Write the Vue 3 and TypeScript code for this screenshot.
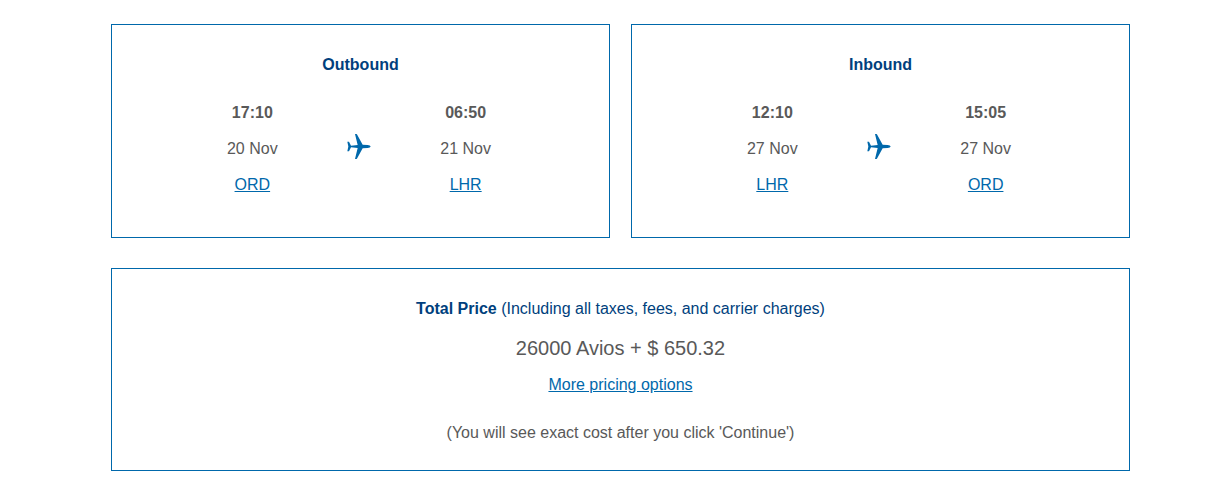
<script setup lang="ts">
interface Stop {
  time: string
  date: string
  airport: string
}

interface Leg {
  title: string
  from: Stop
  to: Stop
}

const legs: Leg[] = [
  {
    title: 'Outbound',
    from: { time: '17:10', date: '20 Nov', airport: 'ORD' },
    to: { time: '06:50', date: '21 Nov', airport: 'LHR' },
  },
  {
    title: 'Inbound',
    from: { time: '12:10', date: '27 Nov', airport: 'LHR' },
    to: { time: '15:05', date: '27 Nov', airport: 'ORD' },
  },
]
</script>

<template>
  <main class="summary">
    <div class="legs">
      <section v-for="leg in legs" :key="leg.title" class="card">
        <h2 class="title">{{ leg.title }}</h2>
        <div class="route">
          <div class="stop">
            <strong>{{ leg.from.time }}</strong>
            <span>{{ leg.from.date }}</span>
            <a href="#">{{ leg.from.airport }}</a>
          </div>
          <svg class="plane" viewBox="0 0 72 75" aria-hidden="true">
            <path
              d="M24 0 H28 Q30 0 31 3 L47 32 L62 33 Q70 34 71 37.500 Q70 41 62 42 L47 43 L31 72 Q30 75 28 75 H24 L32 42 L12 40 L6 52 H1 L4 37.500 L1 23 H6 L12 35 L32 33 Z"
            />
          </svg>
          <div class="stop">
            <strong>{{ leg.to.time }}</strong>
            <span>{{ leg.to.date }}</span>
            <a href="#">{{ leg.to.airport }}</a>
          </div>
        </div>
      </section>
    </div>

    <section class="card total">
      <h2 class="title">
        Total Price <span class="detail">(Including all taxes, fees, and carrier charges)</span>
      </h2>
      <p class="price">26000 Avios + $ 650.32</p>
      <a href="#">More pricing options</a>
      <p class="note">(You will see exact cost after you click 'Continue')</p>
    </section>
  </main>
</template>

<style>
body {
  margin: 0;
  background: #fff;
}
</style>

<style scoped>
.summary {
  display: flex;
  flex-direction: column;
  gap: 30px;
  padding: 24px 89px 16px 111px;
  color: #595959;
  font-family: "Liberation Sans", Arial, sans-serif;
  font-size: 16px;
  line-height: 24px;
  text-align: center;
}

.legs {
  display: grid;
  grid-template-columns: 1fr 1fr;
  gap: 21px;
}

.card {
  padding: 28px 0 40px;
  border: 1px solid #0068ab;
}

.title {
  margin: 0;
  color: #003f7d;
  font-size: 16px;
  font-weight: 700;
}

.detail {
  font-weight: 400;
}

.route {
  display: grid;
  grid-template-columns: repeat(3, 1fr);
  margin-top: 24px;
  padding: 0 90px 0 87px;
}

.stop {
  display: flex;
  flex-direction: column;
  align-items: center;
  gap: 12px;
}

.plane {
  align-self: center;
  justify-self: center;
  width: 24px;
  height: 25px;
  margin-bottom: 5px;
  fill: #0068ab;
}

a {
  color: #0068ab;
  text-decoration: underline;
}

.total {
  padding-bottom: 25px;
}

.price {
  margin: 15px 0 13px;
  font-size: 20px;
}

.note {
  margin: 24px 0 0;
}
</style>
